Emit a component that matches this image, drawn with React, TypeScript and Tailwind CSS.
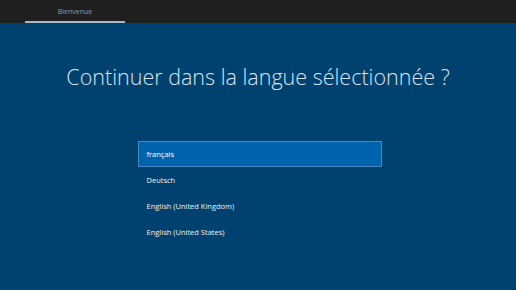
import React from 'react'

const languages = ['français', 'Deutsch', 'English (United Kingdom)', 'English (United States)']

function App() {
  return (
    <div className="w-[516px] h-[290px] flex flex-col bg-[#00426f] overflow-hidden" style={{ fontFamily: '"Open Sans", "Noto Sans", sans-serif' }}>
      <div className="h-[23px] bg-[#1f1f1f] flex items-end pl-[25px]">
        <div className="w-[100px] h-full flex flex-col">
          <div className="flex-1 flex items-center justify-center pt-[3px] text-[7px] text-[#9a9a9a]">Bienvenue</div>
          <div className="h-[2px] bg-[#a9b8c8]"></div>
        </div>
      </div>

      <div className="flex-1 flex flex-col items-center">
        <h1 className="mt-[39px] text-[21.5px] font-light text-[#dbe5ef] leading-[30px]">
          Continuer dans la langue sélectionnée ?
        </h1>

        <ul className="mt-[49px] ml-[3px] w-[244px]">
          {languages.map((lang, i) => (
            <li
              key={lang}
              className={
                i === 0
                  ? 'h-[26px] flex items-center px-[8px] pt-[1px] text-[7.5px] text-white bg-[#0063ad] border border-[#4f86bd]'
                  : 'h-[26px] flex items-center px-[8px] pt-[2px] text-[7.5px] text-[#eef3f8] border border-transparent'
              }
            >
              {lang}
            </li>
          ))}
        </ul>
      </div>
    </div>
  )
}

export default App
